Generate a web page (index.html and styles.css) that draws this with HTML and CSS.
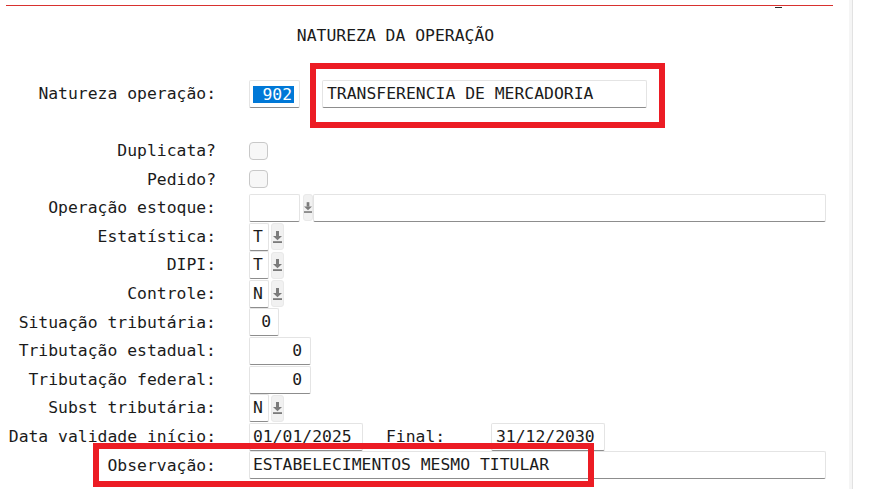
FILE: index.html
```html
<!DOCTYPE html>
<html lang="pt-BR">
<head>
<meta charset="utf-8">
<title>Natureza da Operação</title>
<link rel="stylesheet" href="styles.css">
</head>
<body>
<div class="screen">
  <main class="panel">
    <div class="topline"><span class="dash"></span></div>
    <h1 class="title">NATUREZA DA OPERAÇÃO</h1>

    <div class="row nat-row">
      <span class="lbl">Natureza operação:</span>
      <div class="fields">
        <div class="field w-code"><span class="sel">902</span></div>
        <div class="field w-desc">TRANSFERENCIA DE MERCADORIA</div>
      </div>
    </div>

    <div class="form">
      <span class="lbl">Duplicata?</span>
      <div class="fields"><span class="check"></span></div>

      <span class="lbl">Pedido?</span>
      <div class="fields"><span class="check"></span></div>

      <span class="lbl">Operação estoque:</span>
      <div class="fields">
        <div class="field w-code"></div>
        <span class="btn btn-narrow"><svg class="ico" viewBox="0 0 9 12" width="8" height="11"><rect x="3" y="0" width="3" height="5"/><path d="M0 5H9L4.5 9.2Z"/><rect x="0" y="10.2" width="9" height="1.8"/></svg></span>
        <div class="field w-wide"></div>
      </div>

      <span class="lbl">Estatística:</span>
      <div class="fields">
        <div class="field w-flag">T</div>
        <span class="btn"><svg class="ico" viewBox="0 0 9 12" width="9" height="12"><rect x="3" y="0" width="3" height="5"/><path d="M0 5H9L4.5 9.2Z"/><rect x="0" y="10.2" width="9" height="1.8"/></svg></span>
      </div>

      <span class="lbl">DIPI:</span>
      <div class="fields">
        <div class="field w-flag">T</div>
        <span class="btn"><svg class="ico" viewBox="0 0 9 12" width="9" height="12"><rect x="3" y="0" width="3" height="5"/><path d="M0 5H9L4.5 9.2Z"/><rect x="0" y="10.2" width="9" height="1.8"/></svg></span>
      </div>

      <span class="lbl">Controle:</span>
      <div class="fields">
        <div class="field w-flag">N</div>
        <span class="btn"><svg class="ico" viewBox="0 0 9 12" width="9" height="12"><rect x="3" y="0" width="3" height="5"/><path d="M0 5H9L4.5 9.2Z"/><rect x="0" y="10.2" width="9" height="1.8"/></svg></span>
      </div>

      <span class="lbl">Situação tributária:</span>
      <div class="fields"><div class="field w-sit num">0</div></div>

      <span class="lbl">Tributação estadual:</span>
      <div class="fields"><div class="field w-trib num">0</div></div>

      <span class="lbl">Tributação federal:</span>
      <div class="fields"><div class="field w-trib num">0</div></div>

      <span class="lbl">Subst tributária:</span>
      <div class="fields">
        <div class="field w-flag">N</div>
        <span class="btn"><svg class="ico" viewBox="0 0 9 12" width="9" height="12"><rect x="3" y="0" width="3" height="5"/><path d="M0 5H9L4.5 9.2Z"/><rect x="0" y="10.2" width="9" height="1.8"/></svg></span>
      </div>

      <span class="lbl">Data validade início:</span>
      <div class="fields">
        <div class="field w-date">01/01/2025</div>
        <span class="inline-lbl">Final:</span>
        <div class="field w-date pad4">31/12/2030</div>
      </div>

      <span class="lbl">Observação:</span>
      <div class="fields"><div class="field w-obs">ESTABELECIMENTOS MESMO TITULAR</div></div>
    </div>

    <div class="mark mark-nat"></div>
    <div class="mark mark-obs"></div>
  </main>
  <aside class="side"></aside>
</div>
</body>
</html>
```

FILE: styles.css
```css
html, body {
  margin: 0;
  padding: 0;
  background: #ffffff;
}

body {
  font-family: "DejaVu Sans Mono", "Liberation Mono", monospace;
  font-size: 16.4px;
  color: #1b1b1b;
  overflow: hidden;
}

.screen {
  display: flex;
  height: 489px;
}

.panel {
  position: relative;
  width: 849px;
  padding-top: 5px;
  box-sizing: border-box;
}

.side {
  width: 3px;
  background: #f5f5f5;
  border-right: 1px solid #e2e2e2;
}

.topline {
  margin-left: 6px;
  width: 827px;
  height: 3px;
  border-top: 1px solid #d8322f;
}

.dash {
  display: block;
  margin: 1px 0 0 769px;
  width: 7px;
  height: 1px;
  background: #2a2a2a;
}

.title {
  margin: 17px 0 0 8px;
  width: 775px;
  font-size: 16.4px;
  font-weight: normal;
  line-height: 20px;
  text-align: center;
}

.row {
  display: grid;
  grid-template-columns: 208px auto;
  column-gap: 33px;
  margin-left: 8px;
}

.nat-row {
  margin-top: 34px;
  height: 28px;
  align-items: center;
}

.form {
  display: grid;
  grid-template-columns: 208px auto;
  column-gap: 33px;
  grid-auto-rows: 28.6px;
  margin: 28.8px 0 0 8px;
}

.lbl {
  text-align: right;
  line-height: 20px;
  align-self: center;
  white-space: pre;
}

.fields {
  display: flex;
  align-items: center;
  height: 28px;
}

.nat-row .fields {
  gap: 22px;
}

.field {
  box-sizing: border-box;
  height: 28px;
  display: flex;
  align-items: center;
  padding: 0 3px;
  background: #ffffff;
  border: 1px solid #e4e4e4;
  border-bottom: 1px solid #8d8d8d;
  border-radius: 2px;
  white-space: pre;
  line-height: 20px;
}

.w-code { width: 51px; padding: 0 5px 0 3px; }
.w-desc { width: 325px; padding-left: 4px; }
.w-wide { width: 513px; }
.w-flag { width: 20px; }
.w-sit { width: 30px; padding-right: 7px; }
.w-trib { width: 62px; padding-right: 8px; }
.w-date { width: 114px; }
.w-obs { width: 577px; }
.pad4 { padding-left: 4px; }

.num {
  justify-content: flex-end;
}

.sel {
  flex: 1;
  height: 17px;
  line-height: 17px;
  text-align: right;
  padding-right: 2px;
  background: #0078d7;
  color: #ffffff;
}

.check {
  box-sizing: border-box;
  width: 19px;
  height: 18px;
  border: 1px solid #c8c8c8;
  border-radius: 4px;
  background: #f7f7f7;
}

.btn {
  box-sizing: border-box;
  width: 13px;
  height: 27px;
  margin-left: 2px;
  display: flex;
  align-items: center;
  justify-content: center;
  background: #f1f1f1;
  border: 1px solid #e9e9e9;
  border-radius: 3px;
}

.btn-narrow {
  width: 10px;
  margin-left: 3px;
}

.ico {
  fill: #7b7b7b;
  display: block;
}

.inline-lbl {
  width: 105px;
  margin-left: 23px;
  line-height: 20px;
}

.mark {
  position: absolute;
  box-sizing: border-box;
  border: 6px solid #ec1c24;
}

.mark-nat {
  left: 310px;
  top: 63px;
  width: 355px;
  height: 65px;
}

.mark-obs {
  left: 93px;
  top: 443px;
  width: 501px;
  height: 44px;
}
```
